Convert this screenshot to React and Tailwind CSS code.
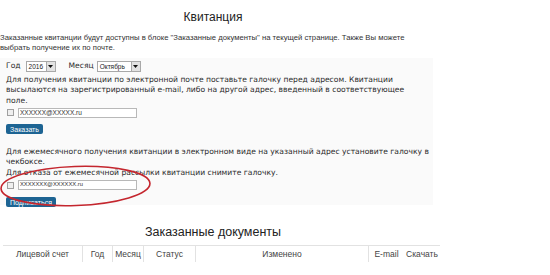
import React from 'react';

const sans = "font-['Liberation_Sans',Arial,sans-serif]";
const verdana = "font-['DejaVu_Sans',Verdana,sans-serif]";

const Select = ({value, width}) => (
    <div className={"flex h-[11px] border border-[#a8a8a8] bg-white " + width}>
        <span className={"flex-1 pl-[2px] text-[6.5px] leading-[9px] text-[#222] " + sans}>{value}</span>
        <span className="flex w-[9px] items-center justify-center border-l border-[#a8a8a8] bg-[#e2e2e2]">
            <svg width="5" height="3" viewBox="0 0 5 3"><path d="M0 0h5L2.5 3z" fill="#111" /></svg>
        </span>
    </div>
);

const EmailRow = ({email, size}) => (
    <div className="flex h-[10px] items-center">
        <span className="ml-[1px] h-[7px] w-[7px] border border-[#a0a0a0] bg-[#efefef]" />
        <div className="ml-[4px] flex h-[10px] w-[119px] items-center border border-[#b8b8b8] bg-white pl-[1px]">
            <span className={"leading-none text-[#333] " + size + " " + sans}>{email}</span>
        </div>
    </div>
);

const Button = ({children, width, className}) => (
    <div className={"flex h-[10px] items-center justify-center rounded-[2px] bg-[#1d6493] text-[7px] leading-none text-white " + width + " " + sans + " " + className}>
        {children}
    </div>
);

const columns = [
    {title: "Лицевой счет", w: "w-[79px]", line: false},
    {title: "Год", w: "w-[30px]", line: true},
    {title: "Месяц", w: "w-[31px]", line: true},
    {title: "Статус", w: "w-[52px]", line: true},
    {title: "Изменено", w: "w-[173px]", line: true},
    {title: "E-mail", w: "w-[36px]", line: true},
    {title: "Скачать", w: "w-[36px]", line: false},
];

export default () => {

    return (
        <div className="relative h-[275px] w-[550px] overflow-hidden bg-white">
            <div className="w-[438px]">
                <h1 className={"w-[426px] pt-[9px] text-center text-[12px] leading-[16px] text-[#222] " + sans}>Квитанция</h1>

                <p className={"mt-[8px] whitespace-nowrap text-[7.7px] leading-[10px] text-[#333] " + sans}>
                    Заказанные квитанции будут доступны в блоке "Заказанные документы" на текущей странице. Также Вы можете<br />
                    выбрать получение их по почте.
                </p>

                <div className="mt-[5px] h-[147px] w-[433px] bg-[#fafafa] px-[6px] pt-[2.5px]">
                    <div className={"flex h-[11px] items-center text-[7.6px] text-[#2b2b2b] " + verdana}>
                        <span>Год</span>
                        <span className="ml-[5px]"><Select value="2016" width="w-[30px]" /></span>
                        <span className="ml-[13px]">Месяц</span>
                        <span className="ml-[3px]"><Select value="Октябрь" width="w-[44px]" /></span>
                    </div>

                    <p className={"mt-[3px] whitespace-nowrap text-[7.6px] leading-[10.6px] text-[#2b2b2b] " + verdana}>
                        Для получения квитанции по электронной почте поставьте галочку перед адресом. Квитанции<br />
                        высылаются на зарегистрированный e-mail, либо на другой адрес, введенный в соответствующее<br />
                        поле.
                    </p>
                    <div className="mt-[1.5px]"><EmailRow email="XXXXXX@XXXXX.ru" size="text-[6.5px]" /></div>
                    <Button width="w-[37px]" className="mt-[6.5px]">Заказать</Button>

                    <p className={"mt-[12.5px] whitespace-nowrap text-[7.6px] leading-[10.6px] text-[#2b2b2b] " + verdana}>
                        Для ежемесячного получения квитанции в электронном виде на указанный адрес установите галочку в<br />
                        чекбоксе.<br />
                        Для отказа от ежемесячной рассылки квитанции снимите галочку.
                    </p>
                    <div className="mt-[1.5px]"><EmailRow email="XXXXXXX@XXXXXX.ru" size="text-[5.8px]" /></div>
                    <Button width="w-[50px]" className="mt-[7px]">Подписаться</Button>
                </div>

                <h2 className={"mt-[19px] w-[426px] text-center text-[12.5px] leading-[16px] text-[#222] " + sans}>Заказанные документы</h2>

                <div className={"ml-[3px] mt-[5px] flex h-[17px] w-[437px] border-t border-[#e2e2e2] text-[8.5px] text-[#444] " + sans}>
                    {columns.map((c, i) => (
                        <div key={i} className={"flex items-center justify-center " + c.w + (c.line ? " border-l border-[#e2e2e2]" : "")}>
                            {c.title}
                        </div>
                    ))}
                </div>
            </div>

            {/* red marker round the subscription e-mail */}
            <svg className="pointer-events-none absolute left-0 top-0" width="550" height="275">
                <ellipse cx="75.5" cy="186" rx="74.5" ry="19.5" fill="none" stroke="#c4262e" strokeWidth="1.6" transform="rotate(-2 75.5 186)" />
            </svg>
        </div>
    )

};
